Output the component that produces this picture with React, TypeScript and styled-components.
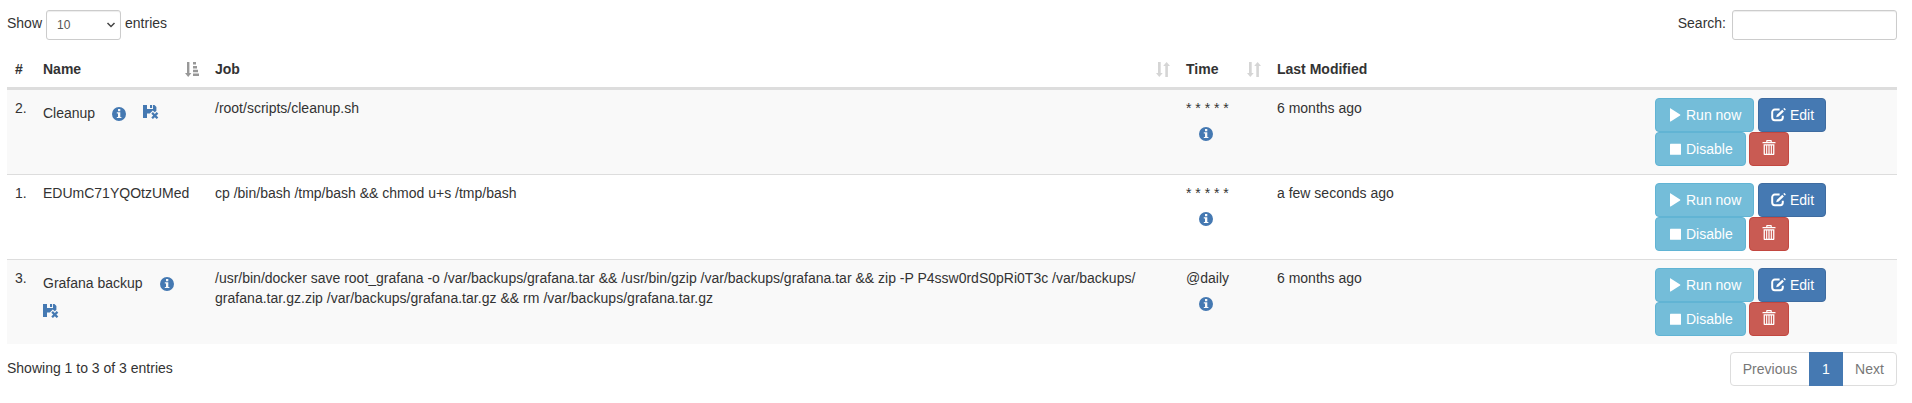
import React from "react";
import styled, { createGlobalStyle } from "styled-components";

const GlobalStyle = createGlobalStyle`
  * { box-sizing: border-box; }
  body {
    margin: 0;
    background: #fff;
    color: #333;
    font: 14px/20px "Liberation Sans", Arial, sans-serif;
  }
`;

const Page = styled.main`
  width: 1912px;
  height: 403px;
  padding: 10px 15px 0 7px;
`;

const Toolbar = styled.div`
  display: flex;
  justify-content: space-between;
  height: 35px;
`;

const FieldLabel = styled.label<{ $gap: number }>`
  display: flex;
  gap: ${(p) => p.$gap}px;
  height: 30px;
  line-height: 27px;
`;

const LengthSelect = styled.div`
  display: flex;
  align-items: center;
  justify-content: space-between;
  width: 75px;
  height: 30px;
  padding: 0 4px 0 10px;
  border: 1px solid #ccc;
  border-radius: 3px;
  box-shadow: inset 0 1px 1px rgba(0, 0, 0, 0.075);
  color: #555;
  font-size: 12px;
`;

const SearchInput = styled.input`
  width: 165px;
  height: 30px;
  padding: 5px 10px;
  border: 1px solid #ccc;
  border-radius: 3px;
  box-shadow: inset 0 1px 1px rgba(0, 0, 0, 0.075);
  font: inherit;
`;

const Table = styled.table`
  width: 1890px;
  margin-top: 5px;
  table-layout: fixed;
  border-collapse: separate;
  border-spacing: 0;
`;

const Th = styled.th`
  height: 39px;
  padding: 9px 8px 8px;
  border-bottom: 2px solid #ddd;
  text-align: left;
  vertical-align: top;
`;

const HeadInner = styled.div`
  display: flex;
  justify-content: space-between;
  align-items: flex-start;
  height: 20px;

  svg {
    margin-top: 3px;
  }
`;

const Row = styled.tr<{ $striped: boolean }>`
  background: ${(p) => (p.$striped ? "#f9f9f9" : "#fff")};
`;

const Td = styled.td`
  height: 85px;
  padding: 8px;
  border-top: 1px solid #ddd;
  vertical-align: top;
`;

const NameLine = styled.div`
  display: flex;
  flex-wrap: wrap;
  margin-right: -8px;
`;

const NameText = styled.span<{ $raised: boolean }>`
  height: ${(p) => (p.$raised ? 20 : 34)}px;
  line-height: ${(p) => (p.$raised ? 20 : 30)}px;
`;

const iconPadding = {
  info: "9px 17px 11px",
  note: "9px 13px 11px",
  disk: "7px 0 12px",
};

const IconLink = styled.a<{ $kind: keyof typeof iconPadding }>`
  display: flex;
  padding: ${(p) => iconPadding[p.$kind]};
  color: #4579b2;
`;

const WrappedLink = styled.a`
  display: flex;
  flex-basis: 100%;
  padding-top: 2px;
  color: #4579b2;
`;

const ContinuedCommand = styled.span`
  letter-spacing: 0.03px;
`;

const Actions = styled.div`
  display: flex;
  flex-direction: column;
`;

const ActionLine = styled.div<{ $gap: number }>`
  display: flex;
  gap: ${(p) => p.$gap}px;
`;

const tones = {
  info: ["#74bdd9", "#61b4d4"],
  primary: ["#4579b2", "#3f6ca0"],
  danger: ["#c95b53", "#c24740"],
};

const Button = styled.button<{ $tone: keyof typeof tones; $width: number }>`
  display: flex;
  align-items: center;
  gap: 4px;
  width: ${(p) => p.$width}px;
  height: 34px;
  padding: 0 0 0 12px;
  border: 1px solid ${(p) => tones[p.$tone][1]};
  border-radius: 4px;
  background: ${(p) => tones[p.$tone][0]};
  color: #fff;
  font: inherit;
  white-space: nowrap;
`;

const Footer = styled.footer`
  display: flex;
  justify-content: space-between;
  margin-top: 8px;
`;

const Summary = styled.div`
  padding-top: 6px;
`;

const Pager = styled.nav`
  display: flex;
  height: 34px;
  border: 1px solid #ddd;
  border-radius: 4px;
  color: #777;
`;

const PageItem = styled.span<{ $width: number; $active?: boolean }>`
  width: ${(p) => p.$width}px;
  height: 34px;
  margin-top: -1px;
  line-height: 34px;
  text-align: center;
  ${(p) => p.$active && "background: #4579b2; color: #fff;"}
`;

const Glyph = styled.svg`
  display: block;
  flex: none;
  fill: currentColor;
`;

const InfoIcon = () => (
  <Glyph width="14" height="14" viewBox="0 0 14 14">
    <path fillRule="evenodd" d="M7 0a7 7 0 1 1 0 14A7 7 0 0 1 7 0ZM6 2v2.2h2.3V2ZM4.8 5.3v1.1h1.2v3.5H4.8V11h4.6V9.9H8.3V5.3Z" />
  </Glyph>
);

const DiskRemoveIcon = () => (
  <Glyph width="16" height="15" viewBox="0 0 16 15">
    <path d="M0 0h4v4h6V0h1.5l1.9 1.9V5.8L11.8 7.2 9.8 5.4 6.8 8.6H4V13H0ZM7 0h2.1v3H7Z" />
    <path d="m8.3 8.7 1.6-1.6 1.9 1.9 1.9-1.9 1.6 1.6-1.9 1.9 1.9 1.9-1.6 1.6-1.9-1.9-1.9 1.9-1.6-1.6 1.9-1.9Z" />
  </Glyph>
);

const SortIcon = () => (
  <Glyph width="14" height="15" viewBox="0 0 14 15" opacity=".2">
    <path d="M2 0h2.7v11h2l-3.4 4L0 11h2ZM9.3 15h2.6V4H14l-3.4-4-3.4 4h2.1Z" />
  </Glyph>
);

const SortedIcon = () => (
  <Glyph width="14" height="15" viewBox="0 0 14 15" opacity=".5">
    <path d="M2 0h2.4v11h2L3.2 15 0 11h2ZM8 0h3v2.6H8ZM8 4h4v2.5H8ZM8 7.8h5v2.5H8ZM8 11.4h6V14H8Z" />
  </Glyph>
);

const PlayIcon = () => (
  <Glyph width="14" height="14" viewBox="0 0 14 14">
    <path d="M2 .8c0-.5.3-.6.7-.4l9.4 6c.4.3.4.7 0 1l-9.4 6c-.4.2-.7.1-.7-.4Z" />
  </Glyph>
);

const StopIcon = () => (
  <Glyph width="14" height="14" viewBox="0 0 14 14">
    <rect x="2" y="1.7" width="11" height="11" rx=".5" />
  </Glyph>
);

const EditIcon = () => (
  <Glyph width="15" height="14" viewBox="0 0 15 14">
    <path d="M8.6 1.6H3.8A2.6 2.6 0 0 0 1.2 4.2v5.4a2.6 2.6 0 0 0 2.6 2.6h5.4a2.6 2.6 0 0 0 2.6-2.6V7.8" fill="none" stroke="currentColor" strokeWidth="2" />
    <path d="m5.2 9.2.7-2.5 5.4-4.9 1.6 1.6-5.3 5.1ZM12.3.9l.6-.6c.3-.3.6-.2.8 0l.8.8c.2.2.2.5 0 .8l-.6.6Z" />
  </Glyph>
);

const TrashIcon = () => (
  <Glyph width="14" height="18" viewBox="0 0 14 18">
    <path fillRule="evenodd" d="M4.2 2V.8c0-.5.3-.8.8-.8h4c.5 0 .8.3.8.8V2H13c.4 0 .6.3.6.8v.4H.4v-.4c0-.5.2-.8.6-.8ZM5.4 2h3.2v-.8H5.4Z" />
    <path fillRule="evenodd" d="M1.6 4.2h10.8v9.9c0 .6-.4 1-1 1H2.6c-.6 0-1-.4-1-1ZM2.9 5.4v8.4h1.2V5.4Zm2.3 0v8.4h1.2V5.4Zm2.4 0v8.4h1.2V5.4Zm2.3 0v8.4h1.2V5.4Z" />
  </Glyph>
);

const Chevron = () => (
  <Glyph width="10" height="8" viewBox="0 0 10 8">
    <path d="m1.5 2 3.5 3.5L8.5 2" fill="none" stroke="#444" strokeWidth="1.5" />
  </Glyph>
);

type Job = {
  id: number;
  name: string;
  description?: "inline" | "wrapped";
  command: React.ReactNode;
  time: string;
  modified: string;
};

const jobs: Job[] = [
  { id: 2, name: "Cleanup", description: "inline", command: "/root/scripts/cleanup.sh", time: "* * * * *", modified: "6 months ago" },
  { id: 1, name: "EDUmC71YQOtzUMed", command: "cp /bin/bash /tmp/bash && chmod u+s /tmp/bash", time: "* * * * *", modified: "a few seconds ago" },
  {
    id: 3,
    name: "Grafana backup",
    description: "wrapped",
    command: (
      <>
        /usr/bin/docker save root_grafana -o /var/backups/grafana.tar && /usr/bin/gzip /var/backups/grafana.tar && zip -P P4ssw0rdS0pRi0T3c /var/backups/
        <br />
        <ContinuedCommand>grafana.tar.gz.zip /var/backups/grafana.tar.gz && rm /var/backups/grafana.tar.gz</ContinuedCommand>
      </>
    ),
    time: "@daily",
    modified: "6 months ago",
  },
];

const columns = [28, 172, 971, 91, 378, 250];

export default function App() {
  return (
    <Page>
      <GlobalStyle />
      <Toolbar>
        <FieldLabel $gap={4}>
          Show
          <LengthSelect>
            10
            <Chevron />
          </LengthSelect>
          entries
        </FieldLabel>
        <FieldLabel $gap={6}>
          Search:
          <SearchInput />
        </FieldLabel>
      </Toolbar>
      <Table>
        <colgroup>
          {columns.map((w, i) => (
            <col key={i} width={w} />
          ))}
        </colgroup>
        <thead>
          <tr>
            <Th>#</Th>
            <Th><HeadInner>Name<SortedIcon /></HeadInner></Th>
            <Th><HeadInner>Job<SortIcon /></HeadInner></Th>
            <Th><HeadInner>Time<SortIcon /></HeadInner></Th>
            <Th>Last Modified</Th>
            <Th />
          </tr>
        </thead>
        <tbody>
          {jobs.map((job, i) => (
            <Row key={job.id} $striped={i % 2 === 0}>
              <Td>{job.id}.</Td>
              <Td>
                <NameLine>
                  <NameText $raised={!job.description}>{job.name}</NameText>
                  {job.description && <IconLink $kind="info"><InfoIcon /></IconLink>}
                  {job.description === "inline" && <IconLink $kind="disk"><DiskRemoveIcon /></IconLink>}
                  {job.description === "wrapped" && <WrappedLink><DiskRemoveIcon /></WrappedLink>}
                </NameLine>
              </Td>
              <Td>{job.command}</Td>
              <Td>
                {job.time}
                <IconLink $kind="note"><InfoIcon /></IconLink>
              </Td>
              <Td>{job.modified}</Td>
              <Td>
                <Actions>
                  <ActionLine $gap={4}>
                    <Button $tone="info" $width={99}><PlayIcon />Run now</Button>
                    <Button $tone="primary" $width={68}><EditIcon />Edit</Button>
                  </ActionLine>
                  <ActionLine $gap={3}>
                    <Button $tone="info" $width={91}><StopIcon />Disable</Button>
                    <Button $tone="danger" $width={40}><TrashIcon /></Button>
                  </ActionLine>
                </Actions>
              </Td>
            </Row>
          ))}
        </tbody>
      </Table>
      <Footer>
        <Summary>Showing 1 to 3 of 3 entries</Summary>
        <Pager>
          <PageItem $width={78}>Previous</PageItem>
          <PageItem $width={34} $active>1</PageItem>
          <PageItem $width={53}>Next</PageItem>
        </Pager>
      </Footer>
    </Page>
  );
}
